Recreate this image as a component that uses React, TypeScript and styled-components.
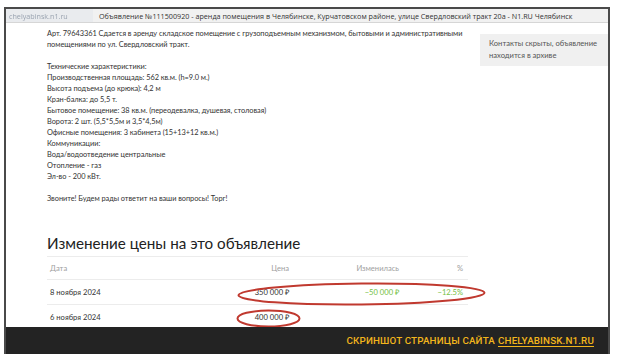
import styled, { createGlobalStyle } from "styled-components";

const GlobalStyle = createGlobalStyle`
  html, body {
    margin: 0;
    padding: 0;
    background: #ffffff;
  }
  body {
    font-family: "Open Sans", "Noto Sans", sans-serif;
    color: #333333;
  }
`;

const Page = styled.div`
  width: 620px;
  height: 356px;
  padding: 7px 10px 2px 4px;
  box-sizing: border-box;
  overflow: hidden;
`;

const Window = styled.div`
  height: 100%;
  border: 2px solid #4a4a4a;
  border-bottom: none;
  display: flex;
  flex-direction: column;
  box-sizing: border-box;
  overflow: hidden;
`;

const TitleBar = styled.div`
  height: 13px;
  flex: none;
  display: flex;
  align-items: center;
  background: #f1f1f1;
  border-bottom: 1px solid #d6d6d6;
  font-size: 7.2px;
  color: #333;
  white-space: nowrap;
`;

const Url = styled.div`
  width: 84px;
  padding-left: 3px;
  height: 100%;
  display: flex;
  align-items: center;
  color: #9aa3b0;
  filter: blur(0.4px);
  background: #e9ebee;
  margin-right: 6px;
`;

const Content = styled.div`
  flex: 1;
  position: relative;
  display: grid;
  grid-template-columns: 430px 1fr;
  gap: 3px;
  padding: 5px 0 0 41px;
  overflow: hidden;
  font-family: "Lato", "Open Sans", sans-serif;
`;

const Main = styled.div`
  min-width: 0;
`;

const Description = styled.div`
  font-size: 7.4px;
  line-height: 11px;
  color: #333;
  white-space: pre;
  letter-spacing: -0.05px;
`;

const Aside = styled.div`
  align-self: start;
  margin-top: 6px;
  background: #f0f0f0;
  padding: 4px 9px 5px 9px;
  font-size: 7.6px;
  line-height: 11.5px;
  color: #555;
`;

const Heading = styled.h2`
  margin: 30px 0 4px 0;
  font-size: 15.2px;
  font-weight: 400;
  color: #222;
  line-height: 18px;
`;

const Table = styled.div`
  width: 421px;
  border-top: 1px solid #ececec;
`;

const Row = styled.div<{ $head?: boolean }>`
  display: grid;
  grid-template-columns: 1fr 90px 110px 66px;
  align-items: center;
  height: ${(p) => (p.$head ? "22px" : "24px")};
  border-bottom: 1px solid #ececec;
  font-size: 7.6px;
  color: ${(p) => (p.$head ? "#a0a0a0" : "#333")};
`;

const Cell = styled.div<{ $right?: boolean; $green?: boolean; $pad?: number }>`
  text-align: ${(p) => (p.$right ? "right" : "left")};
  padding: ${(p) => (p.$right ? `0 ${p.$pad ?? 3}px 0 0` : "0 0 0 3px")};
  color: ${(p) => (p.$green ? "#74c043" : "inherit")};
  white-space: nowrap;
`;

const Marks = styled.svg`
  position: absolute;
  left: 0;
  top: 0;
  pointer-events: none;
`;

const Footer = styled.div`
  height: 27px;
  flex: none;
  background: #232323;
  display: flex;
  align-items: center;
  justify-content: flex-end;
  padding-right: 14px;
  font-family: "Roboto", "DejaVu Sans Condensed", sans-serif;
  font-weight: 500;
  font-size: 9.8px;
  color: #f2b51c;
  letter-spacing: 0.15px;
`;

const FooterLink = styled.span`
  text-decoration: underline;
  text-underline-offset: 2px;
  margin-left: 3px;
`;

const description = `Арт. 79643361 Сдается в аренду складское помещение с грузоподъемным механизмом, бытовыми и административными
помещениями по ул. Свердловский тракт.

Технические характеристики:
Производственная площадь: 562 кв.м. (h=9.0 м.)
Высота подъема (до крюка): 4,2 м
Кран-балка: до 5,5 т.
Бытовое помещение: 38 кв.м. (переодевалка, душевая, столовая)
Ворота: 2 шт. (5,5*5,5м и 3,5*4,5м)
Офисные помещения: 3 кабинета (15+13+12 кв.м.)
Коммуникации:
Вода/водоотведение центральные
Отопление - газ
Эл-во - 200 кВт.

Звоните! Будем рады ответит на ваши вопросы! Торг!`;

const rows = [
  { date: "8 ноября 2024", price: "350 000 ₽", change: "−50 000 ₽", pct: "−12.5%" },
  { date: "6 ноября 2024", price: "400 000 ₽", change: "", pct: "" },
];

export default function App() {
  return (
    <>
      <GlobalStyle />
      <Page>
        <Window>
          <TitleBar>
            <Url>chelyabinsk.n1.ru</Url>
            Объявление №111500920 - аренда помещения в Челябинске, Курчатовском районе, улице Свердловский тракт 20а - N1.RU Челябинск
          </TitleBar>
          <Content>
            <Main>
              <Description>{description}</Description>
              <Heading>Изменение цены на это объявление</Heading>
              <Table>
                <Row $head>
                  <Cell>Дата</Cell>
                  <Cell $right>Цена</Cell>
                  <Cell $right>Изменилась</Cell>
                  <Cell $right $pad={5}>%</Cell>
                </Row>
                {rows.map((r) => (
                  <Row key={r.date}>
                    <Cell>{r.date}</Cell>
                    <Cell $right>{r.price}</Cell>
                    <Cell $right $green>{r.change}</Cell>
                    <Cell $right $green $pad={5}>{r.pct}</Cell>
                  </Row>
                ))}
              </Table>
            </Main>
            <Aside>
              Контакты скрыты, объявление
              <br />
              находится в архиве
            </Aside>
            <Marks width="604" height="320">
              <ellipse cx="355.5" cy="271" rx="123" ry="10.5" fill="none" stroke="#c0392f" strokeWidth="2" transform="rotate(-0.6 355.5 271)" />
              <ellipse cx="262.5" cy="295.5" rx="31" ry="8" fill="none" stroke="#c0392f" strokeWidth="2" />
            </Marks>
          </Content>
          <Footer>
            СКРИНШОТ СТРАНИЦЫ САЙТА<FooterLink>CHELYABINSK.N1.RU</FooterLink>
          </Footer>
        </Window>
      </Page>
    </>
  );
}
